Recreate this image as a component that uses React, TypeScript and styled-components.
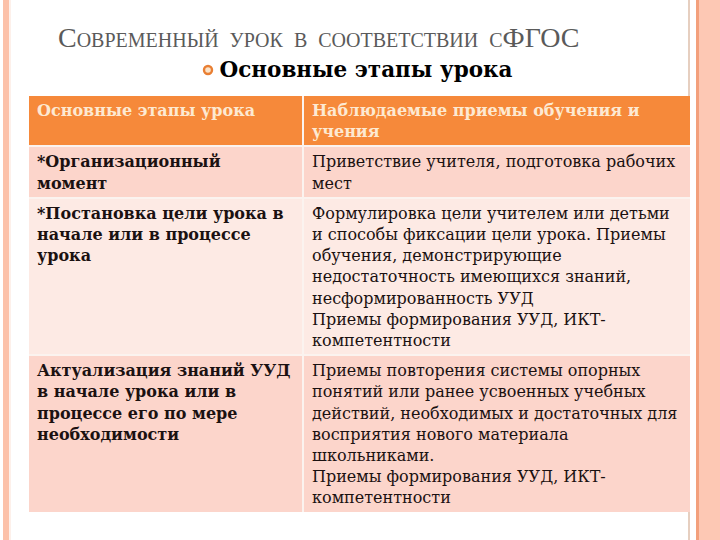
import React from 'react';
import styled, { createGlobalStyle } from 'styled-components';

const GlobalStyle = createGlobalStyle`
  html, body {
    margin: 0;
    padding: 0;
    background: #ffffff;
  }
`;

const Frame = styled.div`
  width: 720px;
  height: 540px;
  overflow: hidden;
  box-sizing: border-box;
  padding: 0 30px 0 29px;
  background: linear-gradient(
    to right,
    #ffffff 0 3px,
    #fcc1a9 3px 9px,
    #fdf0ea 9px 11px,
    #ffffff 11px 688px,
    #e6cfc0 688px 690px,
    #ffffff 690px 696px,
    #f3a07c 696px 699px,
    #fdc8b4 699px 720px
  );
`;

const Title = styled.h1`
  margin: 0;
  padding: 22px 0 0 29px;
  font-family: 'Liberation Serif', serif;
  font-weight: normal;
  font-variant: small-caps;
  font-size: 28px;
  line-height: 32px;
  word-spacing: 4px;
  color: #5a5a5a;
`;

const Subtitle = styled.div`
  display: flex;
  align-items: center;
  justify-content: center;
  gap: 5px;
  margin-top: 1px;
  padding-right: 4px;
  font-family: 'DejaVu Serif', serif;
  font-weight: bold;
  font-size: 21.5px;
  line-height: 30px;
  color: #000000;
`;

const Table = styled.div`
  display: grid;
  grid-template-columns: 273px 1fr;
  gap: 2px;
  margin-top: 11px;
  background: #fbf3ef;
`;

const Cell = styled.div<{ $tone: 'head' | 'dark' | 'light'; $bold?: boolean }>`
  padding: 4px 8px 3px;
  font-family: 'DejaVu Serif', serif;
  font-size: 16px;
  line-height: 21.2px;
  font-weight: ${({ $bold }) => ($bold ? 'bold' : 'normal')};
  color: ${({ $tone }) => ($tone === 'head' ? '#fde9d2' : '#1b1111')};
  background: ${({ $tone }) =>
    $tone === 'head' ? '#f6893a' : $tone === 'dark' ? '#fcd5cb' : '#fdeae4'};
  white-space: pre;
  overflow: hidden;
`;

function Bullet() {
  return (
    <svg width="12" height="12" viewBox="0 0 12 12">
      <circle cx="6" cy="6" r="4" fill="#fbe3c8" stroke="#e97f33" strokeWidth="2.4" />
    </svg>
  );
}

const rows: { tone: 'dark' | 'light'; stage: string; methods: string }[] = [
  {
    tone: 'dark',
    stage: '*Организационный\nмомент',
    methods: 'Приветствие учителя, подготовка рабочих\nмест',
  },
  {
    tone: 'light',
    stage: '*Постановка цели урока в\nначале или в процессе\nурока',
    methods:
      'Формулировка цели учителем или детьми\nи способы фиксации цели урока. Приемы\nобучения, демонстрирующие\nнедостаточность имеющихся знаний,\nнесформированность УУД\nПриемы формирования УУД, ИКТ-\nкомпетентности',
  },
  {
    tone: 'dark',
    stage: 'Актуализация знаний УУД\nв начале урока или в\nпроцессе его по мере\nнеобходимости',
    methods:
      'Приемы повторения системы опорных\nпонятий или ранее усвоенных учебных\nдействий, необходимых и достаточных для\nвосприятия нового материала\nшкольниками.\nПриемы формирования УУД, ИКТ-\nкомпетентности',
  },
];

export default function App() {
  return (
    <Frame>
      <GlobalStyle />
      <Title>Современный урок в соответствии сФГОС</Title>
      <Subtitle>
        <Bullet />
        Основные этапы урока
      </Subtitle>
      <Table>
        <Cell $tone="head" $bold>
          Основные этапы урока
        </Cell>
        <Cell $tone="head" $bold>
          {'Наблюдаемые приемы обучения и\nучения'}
        </Cell>
        {rows.map((row) => (
          <React.Fragment key={row.stage}>
            <Cell $tone={row.tone} $bold>
              {row.stage}
            </Cell>
            <Cell $tone={row.tone}>{row.methods}</Cell>
          </React.Fragment>
        ))}
      </Table>
    </Frame>
  );
}
